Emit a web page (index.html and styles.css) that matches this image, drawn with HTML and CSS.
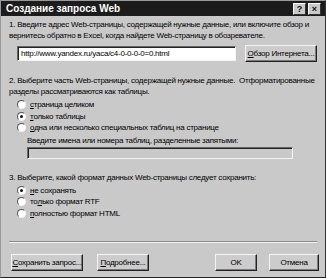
FILE: index.html
```html
<!DOCTYPE html>
<html lang="ru">
<head>
    <meta charset="UTF-8">
    <title>Создание запроса Web</title>
    <link rel="stylesheet" href="styles.css">
</head>
<body>
    <div class="dialog">
        <!-- Title bar -->
        <div class="titlebar">
            <span class="title">Создание запроса Web</span>
            <span class="tb-buttons">
                <span class="tb-btn">?</span>
                <span class="tb-btn">&#215;</span>
            </span>
        </div>

        <div class="content">
            <p class="step">1. Введите адрес Web-страницы, содержащей нужные данные, или включите обзор и вернитесь обратно в Excel, когда найдете Web-страницу в обозревателе.</p>
            <div class="url-row">
                <div class="field url">http://www.yandex.ru/yaca/c4-0-0-0-0=0.html</div>
                <div class="btn browse"><u>О</u>бзор Интернета...</div>
            </div>

            <p class="step step2">2. Выберите часть Web-страницы, содержащей нужные данные.&nbsp; Отформатированные разделы рассматриваются как таблицы.</p>
            <div class="options">
                <div class="opt"><span class="radio"></span><u>с</u>траница целиком</div>
                <div class="opt"><span class="radio on"></span><u>т</u>олько таблицы</div>
                <div class="opt"><span class="radio"></span><u>о</u>дна или несколько специальных таблиц на странице</div>
            </div>
            <div class="tables">
                <div class="label">Введите имена или номера таблиц, разделенные запятыми:</div>
                <div class="field disabled"></div>
            </div>

            <p class="step step3">3. Выберите, какой формат данных Web-страницы следует сохранить:</p>
            <div class="options">
                <div class="opt"><span class="radio on"></span><u>н</u>е сохранять</div>
                <div class="opt"><span class="radio"></span>то<u>л</u>ько формат RTF</div>
                <div class="opt"><span class="radio"></span><u>п</u>олностью формат HTML</div>
            </div>
        </div>

        <div class="separator"></div>

        <div class="footer">
            <div class="btn save"><u>С</u>охранить запрос...</div>
            <div class="btn more"><u>П</u>одробнее...</div>
            <div class="spacer"></div>
            <div class="btn ok">OK</div>
            <div class="btn cancel">Отмена</div>
        </div>
    </div>
</body>
</html>
```

FILE: styles.css
```css
/* Dialog frame */
body {
    margin: 0;
    padding: 0;
    background-color: #2a2a2a;
    font-family: "Liberation Sans", Arial, sans-serif;
    font-size: 8px;
    letter-spacing: -0.25px;
    color: #000;
}

.dialog {
    width: 326px;
    height: 278px;
    box-sizing: border-box;
    background-color: #c9c9c9;
    border: 1px solid #9a9a9a;
    border-right-color: #333;
    border-bottom-color: #222;
    display: flex;
    flex-direction: column;
}

.titlebar {
    height: 15px;
    background-color: #1c1c1c;
    display: flex;
    align-items: center;
    justify-content: space-between;
    padding: 0 4px 0 5px;
}

.title {
    color: #fff;
    font-weight: bold;
    font-size: 10px;
    letter-spacing: 0;
}

.tb-buttons {
    display: flex;
    gap: 2px;
}

.tb-btn {
    width: 11px;
    height: 10px;
    background-color: #c9c9c9;
    border: 1px solid;
    border-color: #fff #333 #333 #fff;
    font-size: 9px;
    font-weight: bold;
    line-height: 10px;
    text-align: center;
    letter-spacing: 0;
    color: #111;
}

/* Main content */
.content {
    padding: 3px 8px 0 8px;
    flex: 1;
}

.step {
    margin: 0;
    line-height: 11px;
}

.url-row {
    display: flex;
    align-items: center;
    margin: 4px 0 0 8px;
}

.field {
    background-color: #fff;
    border: 1px solid;
    border-color: #666 #f4f4f4 #f4f4f4 #666;
    box-shadow: inset 1px 1px 0 #222;
    box-sizing: border-box;
}

.url {
    width: 222px;
    height: 15px;
    line-height: 13px;
    padding-left: 3px;
    white-space: nowrap;
    overflow: hidden;
}

.btn {
    box-sizing: border-box;
    height: 17px;
    line-height: 15px;
    text-align: center;
    background-color: #cccccc;
    border: 1px solid;
    border-color: #f4f4f4 #222 #222 #f4f4f4;
    box-shadow: inset -1px -1px 0 #7a7a7a;
    white-space: nowrap;
}

.browse {
    width: 73px;
    margin-left: 9px;
}

.step2 {
    margin-top: 13px;
}

.options {
    margin: 2px 0 0 8px;
}

.opt {
    display: flex;
    align-items: center;
    height: 11.5px;
}

.radio {
    width: 7px;
    height: 7px;
    border-radius: 50%;
    background-color: #fff;
    border: 1px solid;
    border-color: #555 #f4f4f4 #f4f4f4 #555;
    margin-right: 4px;
    position: relative;
}

.radio.on::after {
    content: "";
    position: absolute;
    left: 2px;
    top: 2px;
    width: 3px;
    height: 3px;
    border-radius: 50%;
    background-color: #111;
}

.tables {
    margin: 1px 0 0 18px;
}

.label {
    line-height: 11px;
}

.disabled {
    width: 266px;
    height: 12px;
    margin-top: 1px;
    background-color: #c9c9c9;
}

.step3 {
    margin-top: 13px;
}

.separator {
    height: 0;
    margin: 0 8px;
    border-top: 1px solid #8a8a8a;
    border-bottom: 1px solid #f4f4f4;
}

.footer {
    display: flex;
    align-items: center;
    padding: 11px 6px 6px 10px;
    gap: 14px;
}

.spacer {
    flex: 1;
}

.save {
    width: 72px;
}

.more {
    width: 52px;
}

.ok {
    width: 42px;
}

.cancel {
    width: 50px;
    margin-left: -2px;
}
```
